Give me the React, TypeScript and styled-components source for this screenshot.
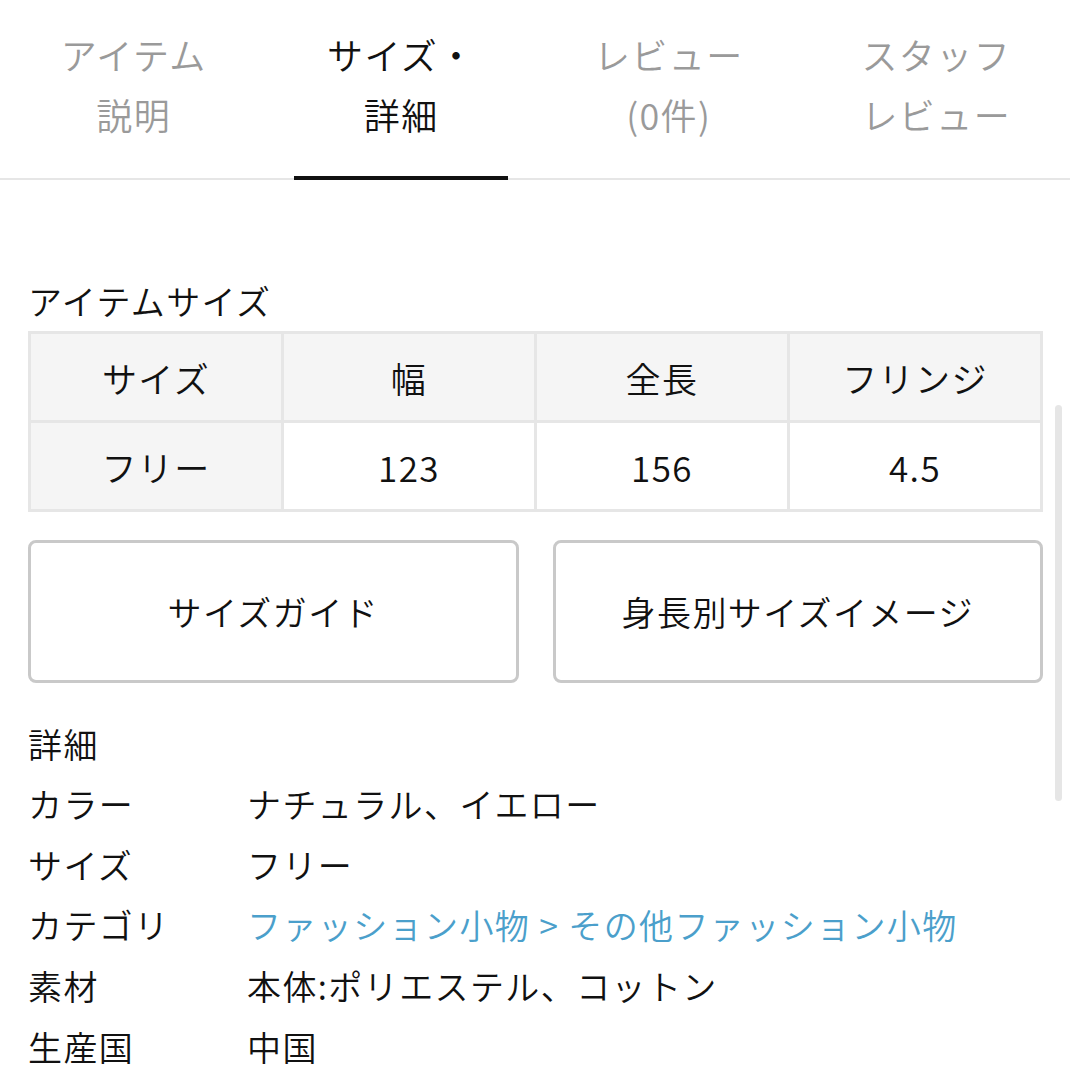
import { createGlobalStyle, styled } from 'styled-components';

const GlobalStyle = createGlobalStyle`
  html, body {
    margin: 0;
    padding: 0;
    background: #fff;
  }
  body {
    font-family: "Noto Sans CJK JP", "Noto Sans", sans-serif;
    font-weight: 350;
    color: #111;
    letter-spacing: 1.4px;
    -webkit-font-smoothing: antialiased;
  }
`;

const tabs = [
  { label: ['アイテム', '説明'], active: false },
  { label: ['サイズ・', '詳細'], active: true },
  { label: ['レビュー', '(0件)'], active: false },
  { label: ['スタッフ', 'レビュー'], active: false },
];

const sizeHead = ['サイズ', '幅', '全長', 'フリンジ'];
const sizeRow = ['フリー', '123', '156', '4.5'];

const details: { label: string; value: string; link?: boolean }[] = [
  { label: 'カラー', value: 'ナチュラル、イエロー' },
  { label: 'サイズ', value: 'フリー' },
  { label: 'カテゴリ', value: 'ファッション小物 > その他ファッション小物', link: true },
  { label: '素材', value: '本体:ポリエステル、コットン' },
  { label: '生産国', value: '中国' },
];

export default function App() {
  return (
    <Page>
      <GlobalStyle />
      <TabBar>
        {tabs.map((t) => (
          <Tab key={t.label[0]} $active={t.active}>
            {t.label[0]}
            <br />
            {t.label[1]}
          </Tab>
        ))}
      </TabBar>
      <Content>
        <Heading>アイテムサイズ</Heading>
        <SizeTable>
          <tbody>
            <tr>
              {sizeHead.map((h) => (
                <Cell key={h} $shade>{h}</Cell>
              ))}
            </tr>
            <tr>
              {sizeRow.map((v, i) => (
                <Cell key={v} $shade={i === 0}>{v}</Cell>
              ))}
            </tr>
          </tbody>
        </SizeTable>
        <Buttons>
          <GuideButton>サイズガイド</GuideButton>
          <GuideButton>身長別サイズイメージ</GuideButton>
        </Buttons>
        <DetailTitle>詳細</DetailTitle>
        <DetailList>
          {details.map((d) => (
            <DetailRow key={d.label}>
              <DetailLabel>{d.label}</DetailLabel>
              <DetailValue $link={d.link}>{d.value}</DetailValue>
            </DetailRow>
          ))}
        </DetailList>
      </Content>
      <ScrollThumb />
    </Page>
  );
}

const Page = styled.div`
  position: relative;
  width: 1070px;
  height: 1080px;
  overflow: hidden;
`;

const TabBar = styled.div`
  display: grid;
  grid-template-columns: repeat(4, 1fr);
  border-bottom: 2px solid #e6e6e6;
`;

const Tab = styled.div<{ $active: boolean }>`
  position: relative;
  padding: 24px 0 34px;
  text-align: center;
  font-size: 36px;
  line-height: 60px;
  color: ${(p) => (p.$active ? '#111' : '#9a9a9a')};

  &::after {
    content: '';
    display: ${(p) => (p.$active ? 'block' : 'none')};
    position: absolute;
    left: 10%;
    right: 10%;
    bottom: -2px;
    height: 4px;
    background: #111;
  }
`;

const Content = styled.div`
  padding: 96px 27px 0 28px;
`;

const Heading = styled.div`
  font-size: 34px;
  line-height: 50px;
  margin-bottom: 5px;
`;

const SizeTable = styled.table`
  width: 100%;
  border-collapse: collapse;
  table-layout: fixed;
  border: 3px solid #e6e6e6;
`;

const Cell = styled.td<{ $shade?: boolean }>`
  height: 86px;
  padding: 0;
  border: 3px solid #e6e6e6;
  background: ${(p) => (p.$shade ? '#f5f5f5' : '#fff')};
  text-align: center;
  font-size: 35px;
  color: #111;
`;

const Buttons = styled.div`
  display: grid;
  grid-template-columns: 1fr 1fr;
  gap: 34px;
  margin-top: 28px;
`;

const GuideButton = styled.div`
  height: 137px;
  display: flex;
  align-items: center;
  justify-content: center;
  border: 3px solid #c9c9c9;
  border-radius: 8px;
  font-size: 34px;
  color: #111;
`;

const DetailTitle = styled.div`
  margin-top: 31px;
  font-size: 34px;
  line-height: 60px;
`;

const DetailList = styled.div`
  display: flex;
  flex-direction: column;
`;

const DetailRow = styled.div`
  display: grid;
  grid-template-columns: 219px 1fr;
  font-size: 34px;
  line-height: 60.7px;
`;

const DetailLabel = styled.div`
  color: #111;
`;

const DetailValue = styled.div<{ $link?: boolean }>`
  color: ${(p) => (p.$link ? '#4b9fcb' : '#111')};
  white-space: nowrap;
`;

const ScrollThumb = styled.div`
  position: absolute;
  right: 8px;
  top: 405px;
  width: 7px;
  height: 396px;
  border-radius: 4px;
  background: #e6e6e6;
`;
